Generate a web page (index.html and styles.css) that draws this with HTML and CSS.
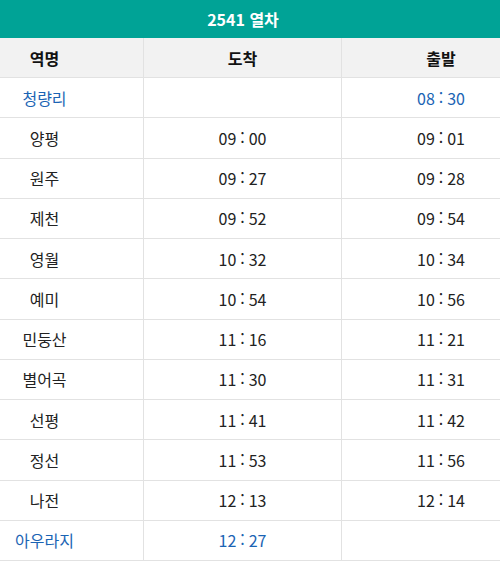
FILE: index.html
```html
<!DOCTYPE html>
<html lang="ko">
<head>
<meta charset="utf-8">
<link rel="stylesheet" href="styles.css">
</head>
<body>
<div class="wrap">
  <div class="timetable">
    <div class="title">2541 열차</div>
    <div class="row head">
      <div class="cell">역명</div>
      <div class="cell">도착</div>
      <div class="cell">출발</div>
    </div>
    <div class="row end">
      <div class="cell">청량리</div>
      <div class="cell"></div>
      <div class="cell"><span class="t">08<span class="c">:</span>30</span></div>
    </div>
    <div class="row">
      <div class="cell">양평</div>
      <div class="cell"><span class="t">09<span class="c">:</span>00</span></div>
      <div class="cell"><span class="t">09<span class="c">:</span>01</span></div>
    </div>
    <div class="row">
      <div class="cell">원주</div>
      <div class="cell"><span class="t">09<span class="c">:</span>27</span></div>
      <div class="cell"><span class="t">09<span class="c">:</span>28</span></div>
    </div>
    <div class="row">
      <div class="cell">제천</div>
      <div class="cell"><span class="t">09<span class="c">:</span>52</span></div>
      <div class="cell"><span class="t">09<span class="c">:</span>54</span></div>
    </div>
    <div class="row">
      <div class="cell">영월</div>
      <div class="cell"><span class="t">10<span class="c">:</span>32</span></div>
      <div class="cell"><span class="t">10<span class="c">:</span>34</span></div>
    </div>
    <div class="row">
      <div class="cell">예미</div>
      <div class="cell"><span class="t">10<span class="c">:</span>54</span></div>
      <div class="cell"><span class="t">10<span class="c">:</span>56</span></div>
    </div>
    <div class="row">
      <div class="cell">민둥산</div>
      <div class="cell"><span class="t">11<span class="c">:</span>16</span></div>
      <div class="cell"><span class="t">11<span class="c">:</span>21</span></div>
    </div>
    <div class="row">
      <div class="cell">별어곡</div>
      <div class="cell"><span class="t">11<span class="c">:</span>30</span></div>
      <div class="cell"><span class="t">11<span class="c">:</span>31</span></div>
    </div>
    <div class="row">
      <div class="cell">선평</div>
      <div class="cell"><span class="t">11<span class="c">:</span>41</span></div>
      <div class="cell"><span class="t">11<span class="c">:</span>42</span></div>
    </div>
    <div class="row">
      <div class="cell">정선</div>
      <div class="cell"><span class="t">11<span class="c">:</span>53</span></div>
      <div class="cell"><span class="t">11<span class="c">:</span>56</span></div>
    </div>
    <div class="row">
      <div class="cell">나전</div>
      <div class="cell"><span class="t">12<span class="c">:</span>13</span></div>
      <div class="cell"><span class="t">12<span class="c">:</span>14</span></div>
    </div>
    <div class="row end">
      <div class="cell">아우라지</div>
      <div class="cell"><span class="t">12<span class="c">:</span>27</span></div>
      <div class="cell"></div>
    </div>
  </div>
</div>
</body>
</html>
```
FILE: styles.css
```css
html, body {
  margin: 0;
  padding: 0;
  background: #ffffff;
  overflow: hidden;
}
.wrap {
  width: 500px;
  overflow: hidden;
}
.timetable {
  width: 594px;
  margin-left: -54px;
  font-family: "Noto Sans CJK KR", "Noto Sans", sans-serif;
  font-size: 16px;
  color: #222222;
}
.title {
  height: 38px;
  background: #00a396;
  color: #ffffff;
  font-weight: 700;
  font-size: 16px;
  display: flex;
  align-items: center;
  justify-content: center;
}
.row {
  display: grid;
  grid-template-columns: 198px 198px 198px;
  height: 40.25px;
  box-sizing: border-box;
  border-bottom: 1px solid #e2e2e2;
}
.row.head {
  height: 40px;
  background: #f2f2f2;
  font-weight: 700;
  color: #111111;
}
.cell {
  display: flex;
  align-items: center;
  justify-content: center;
  border-right: 1px solid #e2e2e2;
}
.cell:last-child {
  border-right: none;
}
.row.end {
  color: #1b64b4;
}
.t {
  display: inline-flex;
  align-items: center;
}
.c {
  margin: 0 4px;
  position: relative;
  top: -1px;
}
```
